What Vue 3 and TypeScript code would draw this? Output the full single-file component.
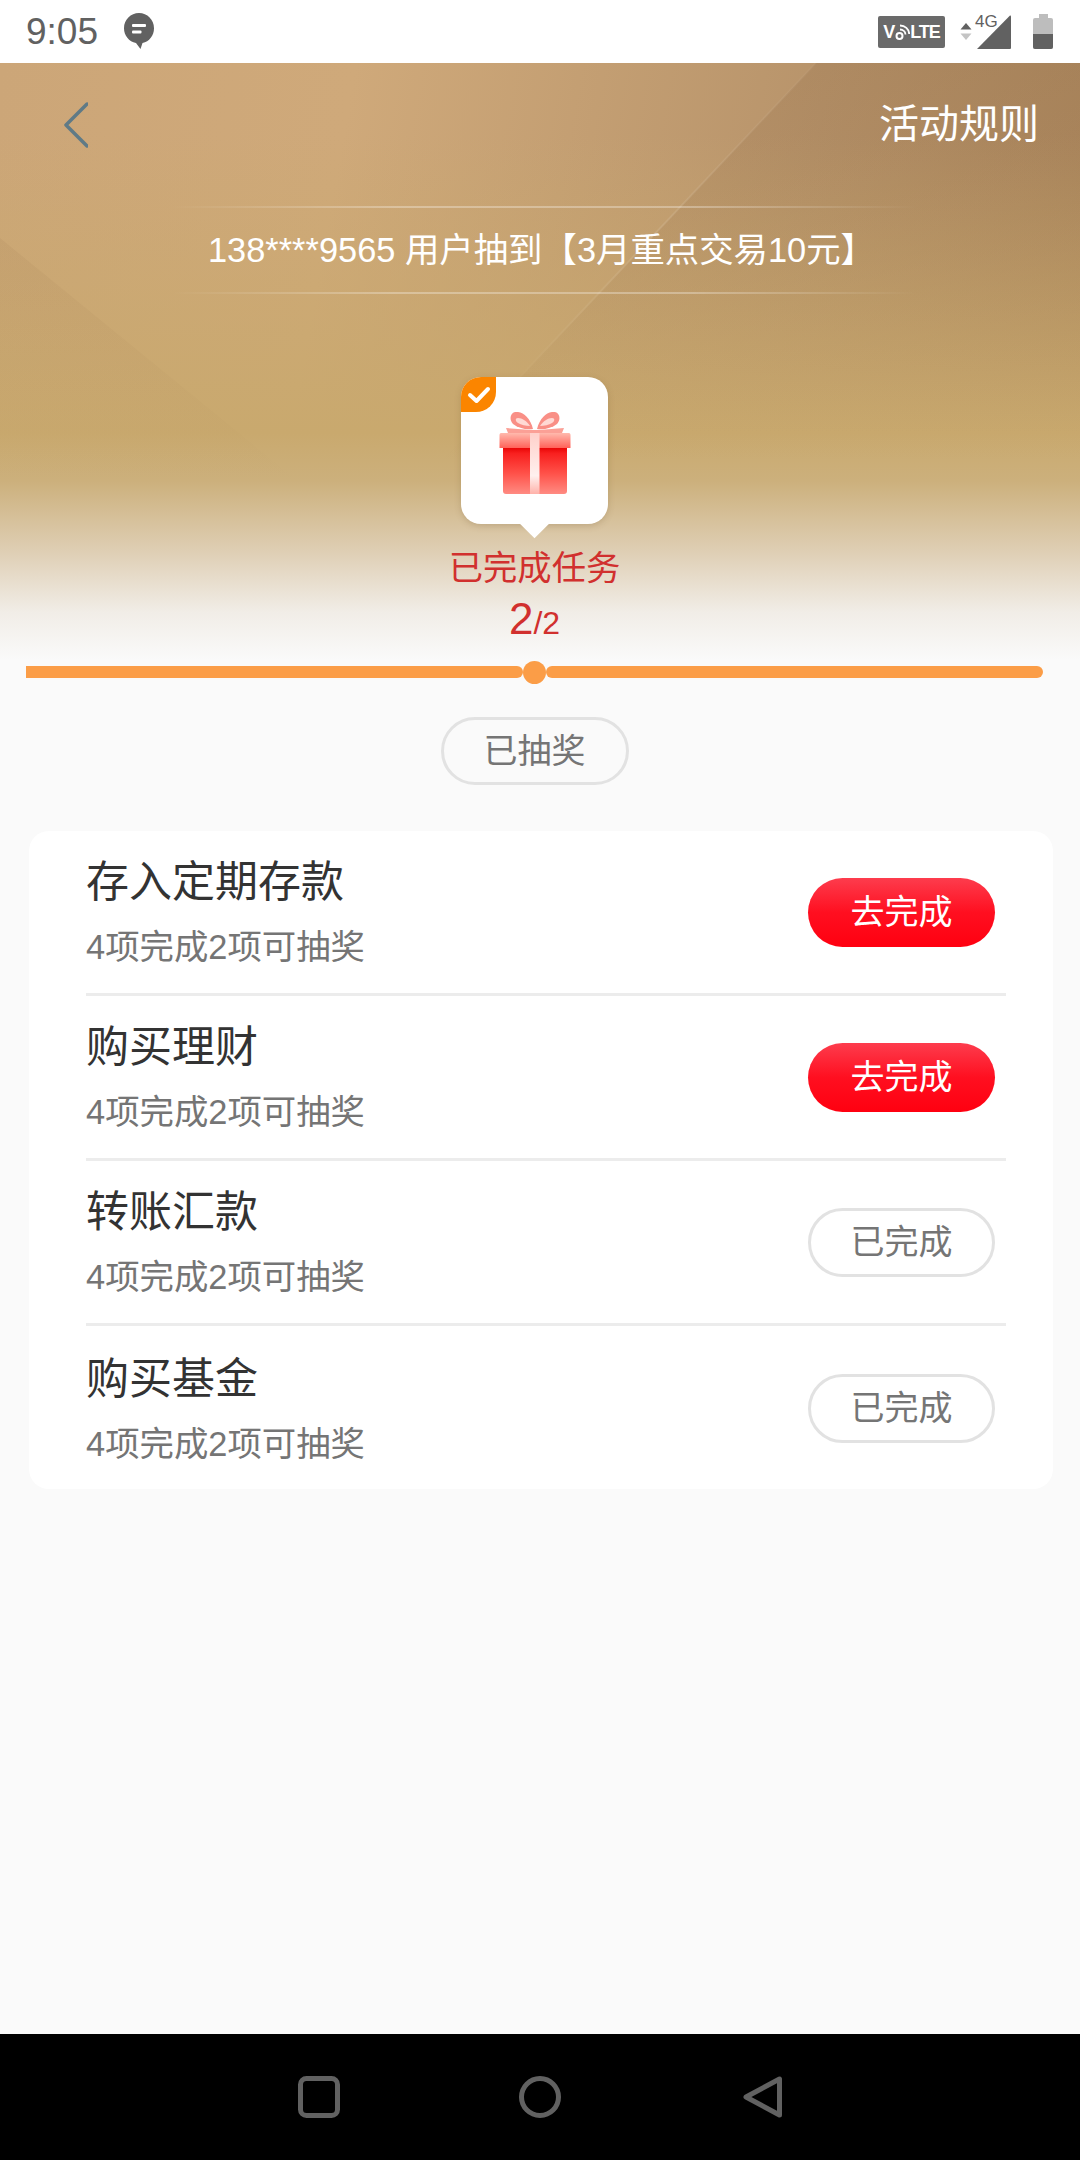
<template>
  <div class="phone">
    <div class="status-bar">
      <div class="status-left">
        <span class="clock">9:05</span>
        <svg class="msg-icon" width="30" height="36" viewBox="0 0 30 36">
          <path d="M15 0C6.700 0 0 6.700 0 15.200 0 22.500 5 28.600 12 30L16.500 36 18.500 30C25.300 28.500 30 22.500 30 15.200 30 6.700 23.300 0 15 0Z" fill="#616161" />
          <rect x="8" y="11" width="14" height="3" rx="1" fill="#fff" />
          <rect x="8" y="17.500" width="9.500" height="3" rx="1" fill="#fff" />
        </svg>
      </div>
      <div class="status-right">
        <div class="volte">
          <span>V</span>
          <svg width="15" height="17" viewBox="0 0 15 17">
            <circle cx="4.500" cy="12" r="3" fill="none" stroke="#fff" stroke-width="2" />
            <path d="M5 5.500C8 5.500 10.300 7.800 10.500 10.500M5 1.500C10 1.500 14 5 14.200 10" fill="none" stroke="#fff" stroke-width="1.800" />
          </svg>
          <span class="lte">LTE</span>
        </div>
        <div class="signal">
          <svg class="arrows" width="12" height="17" viewBox="0 0 12 17">
            <path d="M6 0L11.500 6.500H.5Z" fill="#616161" />
            <path d="M6 17L11.500 10.500H.5Z" fill="#c4c4c4" />
          </svg>
          <span class="net">4G</span>
          <svg class="bars" width="34" height="34" viewBox="0 0 34 34">
            <path d="M33 .5C33.500 .2 34 .5 34 1.500V32.500C34 33.500 33.500 34 32.500 34H0Z" fill="#616161" />
          </svg>
        </div>
        <div class="battery"><div class="battery-cap"></div><div class="battery-body"><div class="battery-level"></div></div></div>
      </div>
    </div>

    <div class="page">
      <div class="hero">
        <svg class="hero-bg" width="1080" height="597" viewBox="0 0 1080 597">
          <defs>
            <linearGradient id="facetFade" x1="0" y1="0" x2="0" y2="1">
              <stop offset="0" stop-color="#8f6a45" stop-opacity=".24" />
              <stop offset="1" stop-color="#8f6a45" stop-opacity="0" />
            </linearGradient>
            <linearGradient id="lineFade" x1="1" y1="0" x2="0" y2="1">
              <stop offset="0" stop-color="#fff" stop-opacity=".03" />
              <stop offset=".5" stop-color="#fff" stop-opacity=".1" />
              <stop offset="1" stop-color="#fff" stop-opacity="0" />
            </linearGradient>
          </defs>
          <path d="M816 0H1080V400H440Z" fill="url(#facetFade)" />
          <path d="M816 0L500 335" stroke="url(#lineFade)" stroke-width="2" fill="none" />
          <path d="M0 175L300 420H0Z" fill="url(#facetFade)" opacity=".4" />
        </svg>
        <div class="top-bar">
          <svg class="back" width="26" height="46" viewBox="0 0 26 46">
            <path d="M25 2L4 23L25 44" fill="none" stroke="#5f7a86" stroke-width="3.500" stroke-linecap="round" stroke-linejoin="round" />
          </svg>
          <span class="rules">活动规则</span>
        </div>
        <div class="notice">138****9565 用户抽到【3月重点交易10元】</div>
        <div class="hero-center">
          <div class="gift-card">
            <div class="badge">
              <svg width="24" height="20" viewBox="0 0 24 20">
                <path d="M3 10L9.500 16L21 4" fill="none" stroke="#fff" stroke-width="4" stroke-linecap="round" stroke-linejoin="round" />
              </svg>
            </div>
            <svg class="gift" width="72" height="82" viewBox="0 0 72 82">
              <defs>
                <linearGradient id="giftBody" x1="0" y1="0" x2="0" y2="1">
                  <stop offset="0" stop-color="#e90606" />
                  <stop offset=".12" stop-color="#f8201f" />
                  <stop offset=".55" stop-color="#ff5149" />
                  <stop offset="1" stop-color="#ff8b82" />
                </linearGradient>
                <linearGradient id="giftLid" x1="0" y1="0" x2="0" y2="1">
                  <stop offset="0" stop-color="#ffb9ad" />
                  <stop offset="1" stop-color="#ff6259" />
                </linearGradient>
                <linearGradient id="giftRibbon" x1="0" y1="0" x2="0" y2="1">
                  <stop offset="0" stop-color="#ffd0ca" />
                  <stop offset=".7" stop-color="#fff0ee" />
                  <stop offset="1" stop-color="#ffb2aa" />
                </linearGradient>
              </defs>
              <path d="M34 17C31 5 23 -1 16 0 11 1 10 8 14 12 19 16 27 18 34 17Z" fill="#f98f86" />
              <path d="M38 17C41 5 49 -1 56 0 61 1 62 8 58 12 53 16 45 18 38 17Z" fill="#f98f86" />
              <path d="M31 14C28 9 23 6 19 6 16 6 16 9 19 11 22 13 27 14 31 14Z" fill="#ffd9d4" />
              <path d="M41 14C44 9 49 6 53 6 56 6 56 9 53 11 50 13 45 14 41 14Z" fill="#ffd9d4" />
              <path d="M7 16L32 18H40L65 16 63 21H9Z" fill="#fba096" />
              <path d="M.5 23C.5 21.500 1.500 21 2.500 21H69.500C70.500 21 71.500 21.500 71.500 23V36H.5Z" fill="url(#giftLid)" />
              <path d="M4 36H68V79C68 81 67 82 65 82H7C5 82 4 81 4 79Z" fill="url(#giftBody)" />
              <rect x="31" y="21" width="9.500" height="61" fill="url(#giftRibbon)" />
            </svg>
          </div>
          <div class="done-label">已完成任务</div>
          <div class="done-count"><b>2</b>/2</div>
        </div>
      </div>

      <div class="progress">
        <div class="seg seg-left"></div>
        <div class="dot"></div>
        <div class="seg seg-right"></div>
      </div>

      <div class="draw-wrap"><div class="pill draw-pill">已抽奖</div></div>

      <div class="task-card">
        <div v-for="task in tasks" :key="task.name" class="task">
          <div class="task-text">
            <div class="task-name">{{ task.name }}</div>
            <div class="task-sub">4项完成2项可抽奖</div>
          </div>
          <div v-if="task.done" class="pill task-btn">已完成</div>
          <div v-else class="go-btn task-btn">去完成</div>
        </div>
      </div>
    </div>

    <div class="nav-bar">
      <svg width="42" height="42" viewBox="0 0 42 42">
        <rect x="2.500" y="2.500" width="37" height="37" rx="6" fill="none" stroke="#616161" stroke-width="5" />
      </svg>
      <svg width="42" height="42" viewBox="0 0 42 42">
        <circle cx="21" cy="21" r="18.500" fill="none" stroke="#616161" stroke-width="5" />
      </svg>
      <svg class="nav-back" width="40" height="42" viewBox="0 0 40 42">
        <path d="M36.500 3V39L3 21Z" fill="none" stroke="#616161" stroke-width="5" stroke-linejoin="round" />
      </svg>
    </div>
  </div>
</template>

<script setup lang="ts">
interface Task {
  name: string
  done: boolean
}

const tasks: Task[] = [
  { name: '存入定期存款', done: false },
  { name: '购买理财', done: false },
  { name: '转账汇款', done: true },
  { name: '购买基金', done: true }
]
</script>

<style>
html, body {
  margin: 0;
  background: #fafafa;
}
</style>

<style scoped>
.phone {
  width: 1080px;
  height: 2160px;
  display: flex;
  flex-direction: column;
  font-family: "Liberation Sans", "Noto Sans CJK SC", sans-serif;
  overflow: hidden;
}

.status-bar {
  height: 63px;
  flex: none;
  background: #fff;
  display: flex;
  justify-content: space-between;
  align-items: center;
  padding: 0 27px 0 26px;
  box-sizing: border-box;
}

.status-left {
  display: flex;
  align-items: center;
  gap: 26px;
}

.clock {
  font-size: 37px;
  color: #616161;
}

.msg-icon {
  margin-top: -1px;
}

.status-right {
  display: flex;
  align-items: center;
}

.volte {
  width: 67px;
  height: 32px;
  margin-top: 1px;
  border-radius: 2px;
  background: #6a6a6a;
  color: #fff;
  font-size: 18px;
  font-weight: 700;
  display: flex;
  align-items: center;
  justify-content: center;
}

.lte {
  letter-spacing: -1px;
}

.signal {
  position: relative;
  margin-left: 15px;
  display: flex;
  align-items: center;
  gap: 5px;
}

.net {
  position: absolute;
  left: 15px;
  top: -3px;
  font-size: 17px;
  color: #616161;
}

.battery {
  width: 20px;
  margin-left: 22px;
  display: flex;
  flex-direction: column;
  align-items: center;
}

.battery-cap {
  width: 9px;
  height: 4px;
  background: #bdbdbd;
}

.battery-body {
  width: 20px;
  height: 31px;
  border-radius: 2px;
  background: #bdbdbd;
  overflow: hidden;
  display: flex;
  align-items: flex-end;
}

.battery-level {
  width: 100%;
  height: 15px;
  background: #616161;
}

.page {
  flex: 1;
  background: #fafafa;
}

.hero {
  position: relative;
  height: 597px;
  display: flex;
  flex-direction: column;
  background:
    linear-gradient(180deg, rgba(201, 169, 110, 0) 12%, #c9a96e 62%, #ccb07c 70%, #dfcfb5 82%, #f1ede7 92%, #fafafa 100%),
    linear-gradient(100deg, #cca678 0, #cfa97a 30%, #b8946b 70%, #ab865c 100%);
}

.hero-bg {
  position: absolute;
  left: 0;
  top: 0;
}

.top-bar {
  position: relative;
  height: 143px;
  padding: 39px 41px 0 62px;
  box-sizing: border-box;
  display: flex;
  justify-content: space-between;
  align-items: flex-start;
}

.rules {
  margin-top: 2px;
  font-size: 40px;
  line-height: 40px;
  color: #fff;
}

.notice {
  position: relative;
  width: 744px;
  height: 88px;
  margin-left: 172px;
  padding-right: 5px;
  line-height: 84px;
  text-align: center;
  font-size: 34.400px;
  color: #fff;
  white-space: nowrap;
  border-style: solid;
  border-width: 2px 0;
  border-image: linear-gradient(90deg, rgba(255, 255, 255, 0), rgba(255, 255, 255, .3) 30%, rgba(255, 255, 255, .3) 70%, rgba(255, 255, 255, 0)) 1;
  box-sizing: border-box;
}

.hero-center {
  position: relative;
  width: 1069px;
  display: flex;
  flex-direction: column;
  align-items: center;
}

.gift-card {
  position: relative;
  width: 147px;
  height: 147px;
  margin-top: 83px;
  background: #fff;
  border-radius: 20px;
  box-shadow: 0 2px 6px rgba(120, 90, 50, .25);
  display: flex;
  align-items: center;
  justify-content: center;
}

.gift-card::after {
  content: "";
  position: absolute;
  left: 63px;
  bottom: -10px;
  width: 21px;
  height: 21px;
  background: #fff;
  transform: rotate(45deg);
}

.badge {
  position: absolute;
  left: 0;
  top: 0;
  width: 35px;
  height: 35px;
  background: #fb8500;
  border-radius: 20px 0 20px 0;
  display: flex;
  align-items: center;
  justify-content: center;
}

.gift {
  margin-top: 5px;
}

.done-label {
  margin-top: 22px;
  font-size: 34.300px;
  line-height: 44px;
  color: #d1302e;
}

.done-count {
  margin-top: 6px;
  font-size: 32px;
  line-height: 46px;
  color: #d1302e;
}

.done-count b {
  font-size: 44px;
  font-weight: 400;
}

.progress {
  margin: 0 37px 0 26px;
  height: 24px;
  display: flex;
  align-items: center;
}

.seg {
  flex: 1;
  height: 12px;
  background: #fb9d47;
}

.seg-left {
  border-radius: 0 6px 6px 0;
}

.seg-right {
  border-radius: 6px;
}

.dot {
  width: 23px;
  height: 23px;
  border-radius: 50%;
  background: #fb9d47;
}

.draw-wrap {
  width: 1069px;
  margin-top: 33px;
  display: flex;
  justify-content: center;
}

.pill {
  border: 3px solid #e2e2e2;
  color: #757575;
  background: #fafafa;
}

.draw-pill {
  width: 188px;
  height: 68px;
  box-sizing: border-box;
  border-radius: 34px;
  font-size: 34px;
  line-height: 62px;
  text-align: center;
}

.task-card {
  margin: 46px 27px 0 29px;
  height: 658px;
  background: #fff;
  border-radius: 20px;
  padding: 0 47px 0 57px;
}

.task {
  height: 165px;
  display: flex;
  align-items: center;
  justify-content: space-between;
  padding-right: 11px;
  box-sizing: border-box;
  border-bottom: 3px solid #ececec;
}

.task:last-child {
  border-bottom: none;
}

.task-text {
  margin-top: -1px;
}

.task-name {
  font-size: 43px;
  line-height: 56px;
  color: #333;
}

.task-sub {
  margin-top: 15px;
  font-size: 34.400px;
  line-height: 44px;
  color: #757575;
}

.task-btn {
  width: 187px;
  height: 69px;
  box-sizing: border-box;
  border-radius: 35px;
  font-size: 34px;
  text-align: center;
}

.task .pill {
  line-height: 63px;
  background: #fff;
}

.go-btn {
  line-height: 69px;
  color: #fff;
  background: linear-gradient(180deg, #fd3c4d 0, #ff0f20 50%, #ff0010 100%);
}

.nav-bar {
  height: 126px;
  flex: none;
  background: #000;
  display: flex;
  align-items: center;
  justify-content: center;
  gap: 179px;
  padding: 0 0 1px 1px;
  box-sizing: border-box;
}

.nav-back {
  margin-left: 3px;
}
</style>
